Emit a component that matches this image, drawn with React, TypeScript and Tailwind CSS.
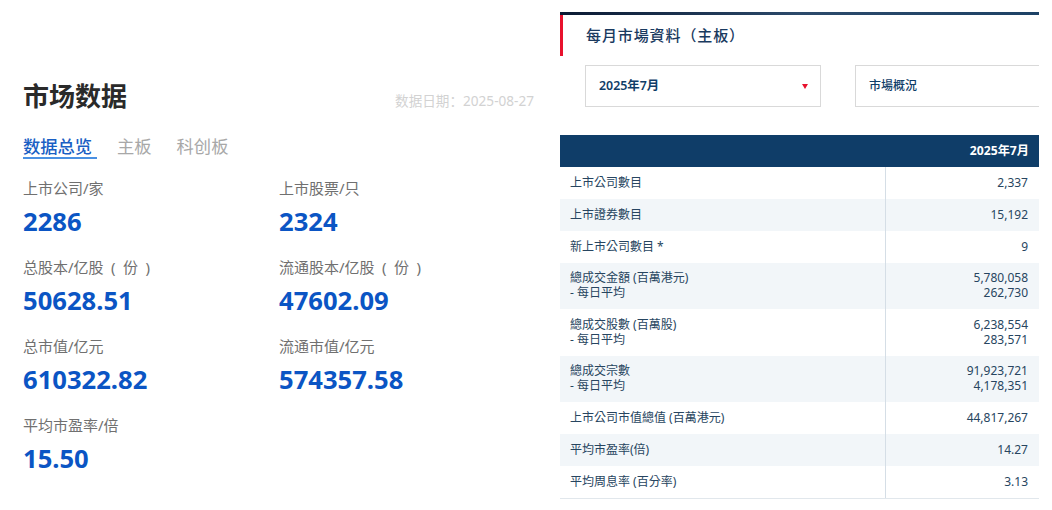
const cjk = "font-['Noto_Sans','Noto_Sans_CJK_SC',sans-serif]";
const tc = "font-['Noto_Sans','Noto_Sans_CJK_TC',sans-serif]";

const stats: [string, string][] = [
  ["上市公司/家", "2286"],
  ["上市股票/只", "2324"],
  ["总股本/亿股\u2002(\u2002份\u2002)", "50628.51"],
  ["流通股本/亿股\u2002(\u2002份\u2002)", "47602.09"],
  ["总市值/亿元", "610322.82"],
  ["流通市值/亿元", "574357.58"],
  ["平均市盈率/倍", "15.50"],
];

const rows: { l: string[]; v: string[]; h: string; alt: boolean }[] = [
  { l: ["上市公司數目"], v: ["2,337"], h: "h-[32px]", alt: false },
  { l: ["上市證券數目"], v: ["15,192"], h: "h-[32px]", alt: true },
  { l: ["新上市公司數目 *"], v: ["9"], h: "h-[32px]", alt: false },
  { l: ["總成交金額 (百萬港元)", "- 每日平均"], v: ["5,780,058", "262,730"], h: "h-[46px]", alt: true },
  { l: ["總成交股數 (百萬股)", "- 每日平均"], v: ["6,238,554", "283,571"], h: "h-[47px]", alt: false },
  { l: ["總成交宗數", "- 每日平均"], v: ["91,923,721", "4,178,351"], h: "h-[46px]", alt: true },
  { l: ["上市公司市值總值 (百萬港元)"], v: ["44,817,267"], h: "h-[32px]", alt: false },
  { l: ["平均市盈率(倍)"], v: ["14.27"], h: "h-[32px]", alt: true },
  { l: ["平均周息率 (百分率)"], v: ["3.13"], h: "h-[32px]", alt: false },
];

export default function App() {
  return (
    <div className="flex w-[1052px] h-[510px] bg-white overflow-hidden">
      <div className={`w-[560px] shrink-0 pl-[23px] pr-[26px] pt-[79px] ${cjk}`}>
        <div className="flex items-end justify-between h-[34px]">
          <h1 className="text-[26px] leading-[34px] font-bold text-[#2a2a2a]">市场数据</h1>
          <span className="text-[13.6px] leading-[18px] mb-[3px] text-[#d2d2d2]">数据日期：2025-08-27</span>
        </div>
        <div className="flex mt-[22px] text-[17.3px] leading-[24px]">
          <span className="text-[#1a5fc4] font-medium border-b-2 border-[#4a90e2] h-[24px] w-[74px] whitespace-nowrap">数据总览</span>
          <span className="text-[#a8a8a8] ml-[20px]">主板</span>
          <span className="text-[#a8a8a8] ml-[25px]">科创板</span>
        </div>
        <div className="grid grid-cols-[256px_1fr] mt-[19px]">
          {stats.map(([label, value]) => (
            <div key={label} className="h-[79px]">
              <div className="text-[15px] leading-[20px] text-[#707070] whitespace-nowrap">{label}</div>
              <div className="text-[25.6px] leading-[32px] mt-[8px] font-bold text-[#0b55c4]">{value}</div>
            </div>
          ))}
        </div>
      </div>

      <div className={`w-[479px] shrink-0 pt-[12px] overflow-hidden ${tc}`}>
        <div className="h-[3px] bg-gradient-to-r from-[#0b1a33] via-[#2c4a6b] to-[#1d4266]" />
        <div className="h-[41px] border-l-[3px] border-[#e8112d] pl-[23px] flex items-center pb-[1px]">
          <span className="text-[15px] font-medium tracking-[0.9px] text-[#1a3a5f]">每月市場資料（主板）</span>
        </div>
        <div className="flex pl-[25px] mt-[9px] gap-[34px]">
          <div className="w-[236px] h-[42px] shrink-0 border border-[#d9d9d9] flex items-center justify-between pl-[13px] pr-[12px]">
            <span className="text-[12.4px] font-semibold text-[#0f3d68]">2025年7月</span>
            <span className="w-0 h-0 border-x-[3.5px] border-x-transparent border-t-[5px] border-t-[#e8112d]" />
          </div>
          <div className="w-[260px] h-[42px] shrink-0 border border-[#d9d9d9] flex items-center pl-[13px]">
            <span className="text-[12px] font-medium text-[#0f3d68]">市場概況</span>
          </div>
        </div>
        <div className="mt-[28px] h-[32px] bg-[#0f3d68] flex items-center justify-end pr-[10px]">
          <span className="text-[12.2px] font-bold text-white">2025年7月</span>
        </div>
        <div className="border-b border-[#e1e7ec]">
          {rows.map((r) => (
            <div key={r.l[0]} className={`flex ${r.h} text-[12px] leading-[15px] text-[#274560] ${r.alt ? "bg-[#f2f6f9]" : "bg-white"}`}>
              <div className="w-[326px] shrink-0 pl-[10px] pb-[2px] flex flex-col justify-center border-r border-[#d5dee6]">
                {r.l.map((t) => (
                  <div key={t}>{t}</div>
                ))}
              </div>
              <div className="flex-1 pr-[11px] pb-[2px] flex flex-col justify-center items-end">
                {r.v.map((t) => (
                  <div key={t}>{t}</div>
                ))}
              </div>
            </div>
          ))}
        </div>
      </div>
    </div>
  );
}
